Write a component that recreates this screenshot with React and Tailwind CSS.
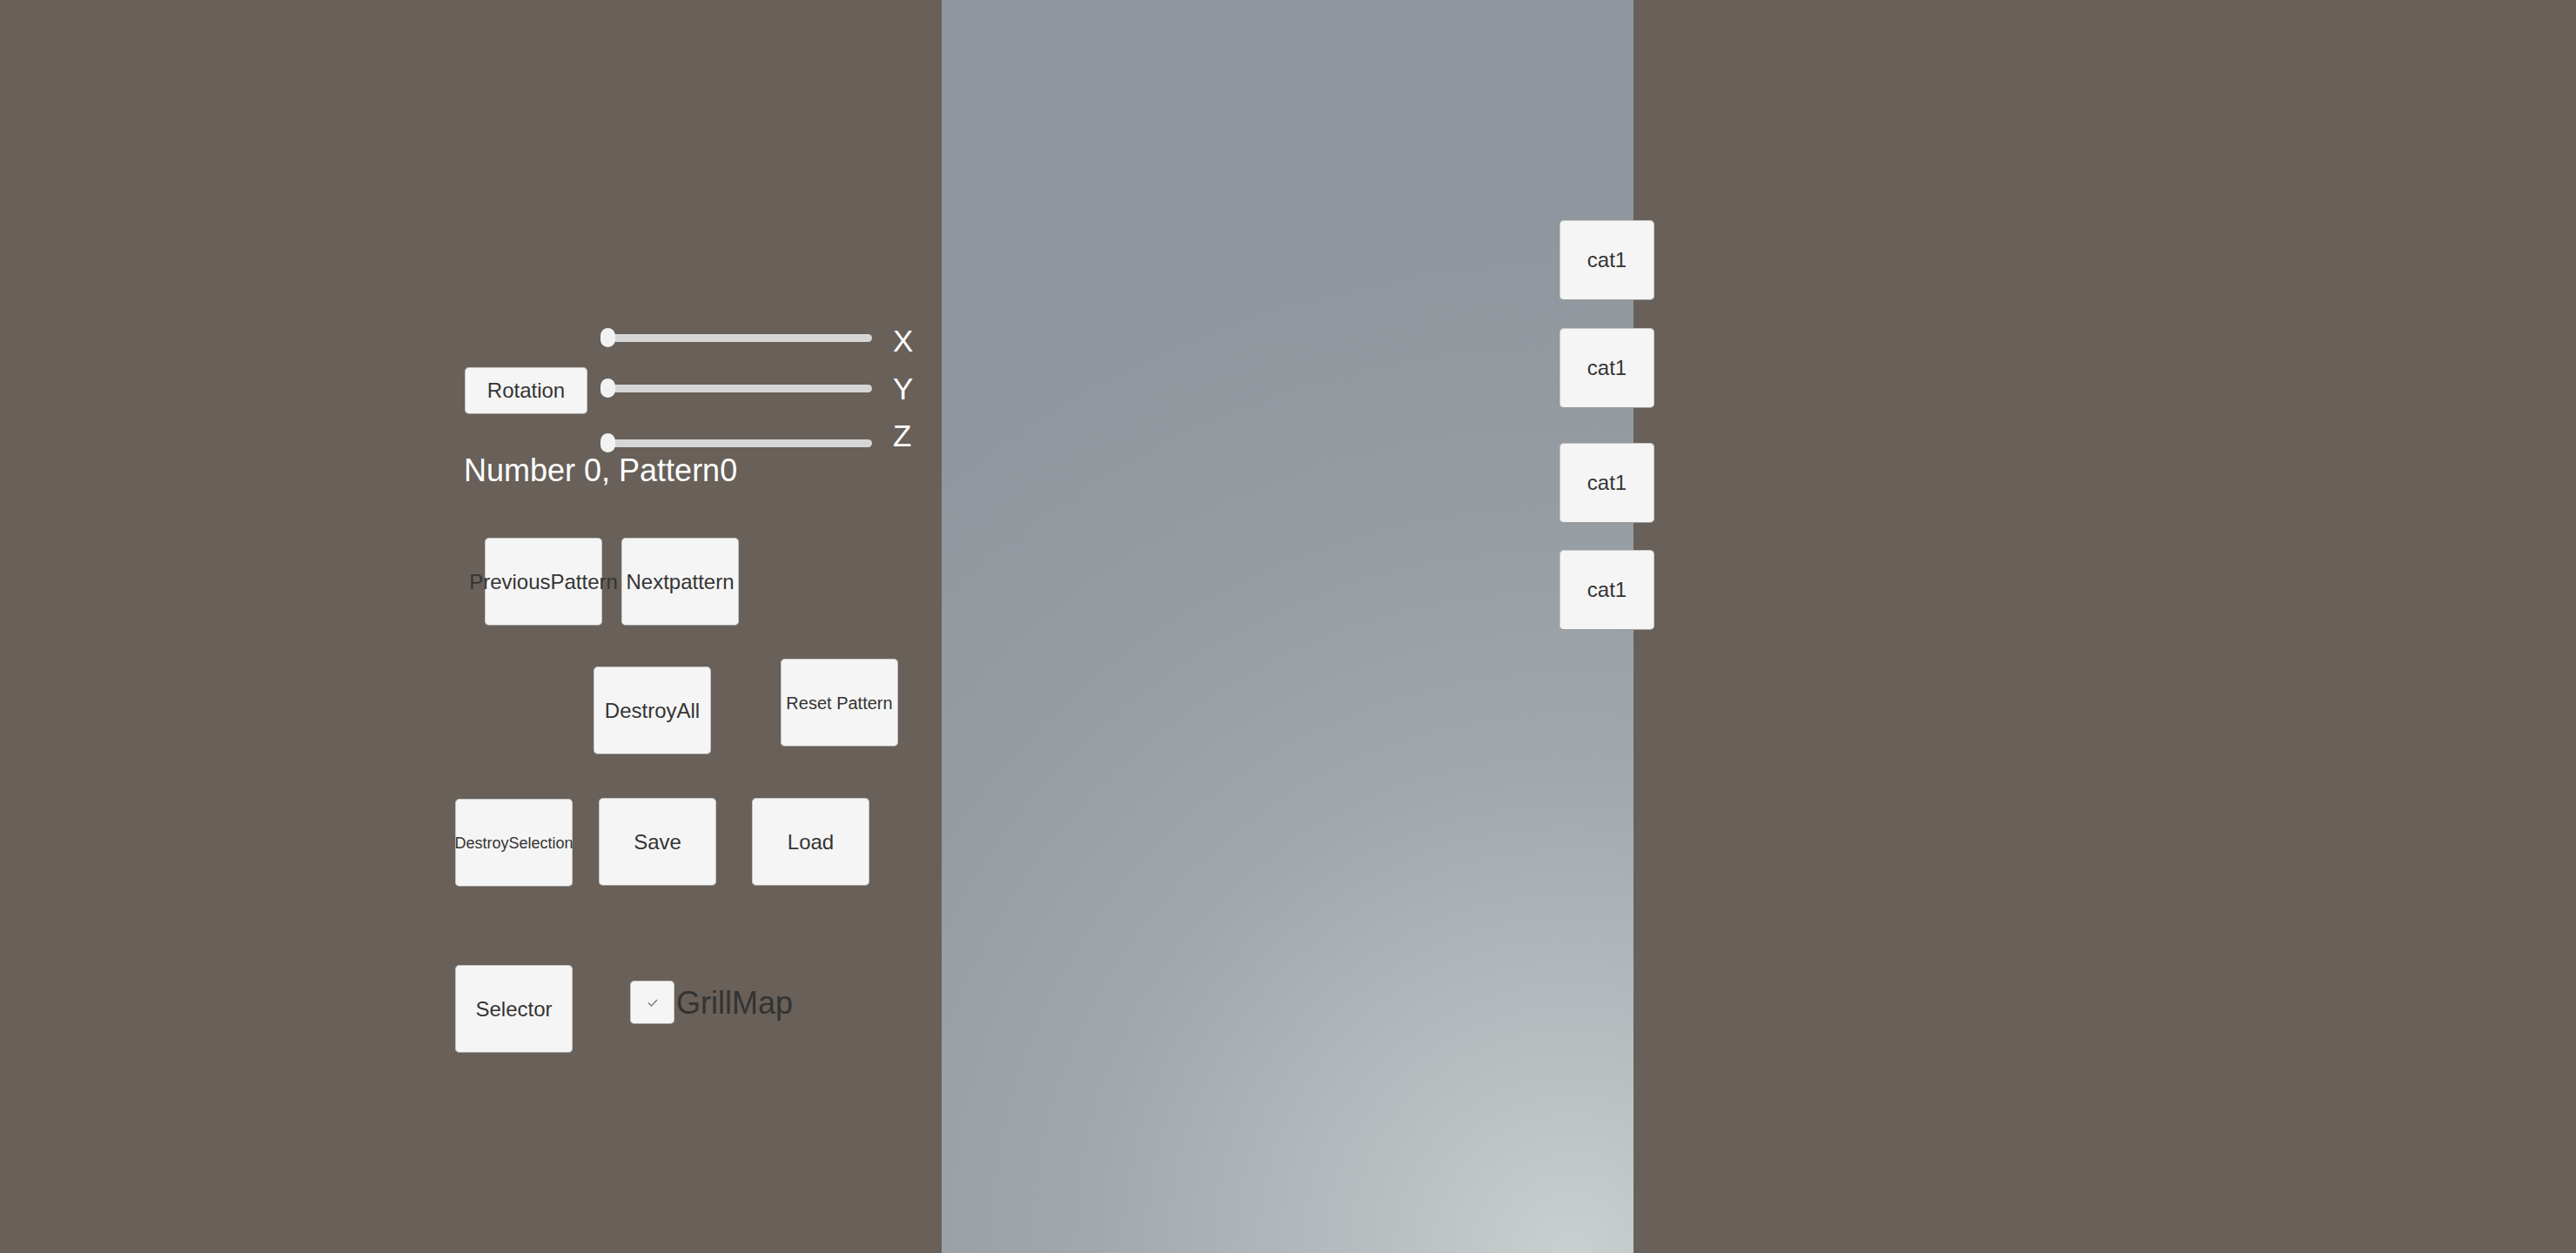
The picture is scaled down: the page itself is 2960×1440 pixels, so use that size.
import React from 'react';

const font = "font-['Liberation_Sans',Arial,sans-serif]";

function UiButton({ label, className = '', textSize = 'text-[24px]' }) {
  return (
    <button
      type="button"
      className={`flex items-center justify-center shrink-0 bg-[#f5f5f5] rounded-[5px] border border-[#c6c6c6] border-b-[#9c9c9c] text-[#343434] leading-none whitespace-nowrap ${textSize} ${className}`}
    >
      {label}
    </button>
  );
}

function AxisSlider({ axis, rowClass = '', labelClass = '' }) {
  return (
    <div className={`flex items-center h-[24px] ${rowClass}`}>
      <div className="relative w-[312px] h-[24px] flex items-center">
        <div className="w-full h-[9px] rounded-full bg-[#d6d6d6]" />
        <div className="absolute left-0 top-[1px] w-[17px] h-[22px] rounded-full bg-[#f2f2f2]" />
      </div>
      <span className={`ml-[24px] text-[35px] leading-none text-white ${labelClass}`}>{axis}</span>
    </div>
  );
}

export default function App() {
  const cats = [
    { id: 1, gap: '' },
    { id: 2, gap: 'mt-[32px]' },
    { id: 3, gap: 'mt-[40px]' },
    { id: 4, gap: 'mt-[31px]' },
  ];

  return (
    <div className={`w-[2960px] h-[1440px] bg-[#686059] flex overflow-hidden ${font}`}>

      {/* left control panel */}
      <div className="w-[1082px] shrink-0 pl-[523px] pt-[376px] flex flex-col">

        {/* rotation + sliders */}
        <div className="flex items-center">
          <UiButton label="Rotation" className="ml-[11px] w-[141px] h-[54px]" />
          <div className="ml-[15px] flex flex-col">
            <AxisSlider axis="X" labelClass="mt-[6px]" />
            <AxisSlider axis="Y" rowClass="mt-[34px]" />
            <AxisSlider axis="Z" rowClass="mt-[39px]" labelClass="mb-[18px]" />
          </div>
        </div>

        <p className="mt-[2px] ml-[10px] text-[36px] leading-none text-white">Number 0, Pattern0</p>

        {/* pattern navigation */}
        <div className="mt-[59px] ml-[34px] flex gap-[22px]">
          <UiButton label="PreviousPattern" className="w-[135px] h-[101px]" />
          <UiButton label="Nextpattern" className="w-[135px] h-[101px]" />
        </div>

        <div className="mt-[38px] flex items-start">
          <UiButton label="DestroyAll" className="ml-[159px] mt-[9px] w-[135px] h-[101px]" />
          <UiButton label="Reset Pattern" textSize="text-[20px]" className="ml-[80px] w-[135px] h-[101px]" />
        </div>

        <div className="mt-[50px] flex items-start">
          <UiButton label="DestroySelection" textSize="text-[18px]" className="mt-[1px] w-[135px] h-[101px]" />
          <UiButton label="Save" className="ml-[30px] w-[135px] h-[101px]" />
          <UiButton label="Load" className="ml-[41px] w-[135px] h-[101px]" />
        </div>

        <div className="mt-[90px] flex items-start">
          <UiButton label="Selector" className="w-[135px] h-[101px]" />
          <div className="ml-[66px] mt-[18px] w-[51px] h-[50px] shrink-0 rounded-[5px] bg-[#f5f5f5] border border-[#c6c6c6] border-b-[#9c9c9c] flex items-center justify-center">
            <svg width="12" height="9" viewBox="0 0 12 9" fill="none">
              <polyline points="1,4.5 4.5,8 11,1" stroke="#7a7a7a" strokeWidth="1.3" />
            </svg>
          </div>
          <span className="ml-[2px] mt-[26px] text-[36px] leading-none text-[#333333]">GrillMap</span>
        </div>
      </div>

      {/* viewport panel */}
      <div className="w-[795px] shrink-0 h-full pt-[253px] flex justify-end bg-[radial-gradient(circle_at_91%_100%,#cacfcf_0px,#b4babd_280px,#a1a7ad_560px,#959ca2_860px,#8f969d_1180px)]">
        <div className="mr-[-24px] flex flex-col">
          {cats.map(c => (
            <UiButton key={c.id} label="cat1" className={`w-[109px] h-[92px] ${c.gap}`} />
          ))}
        </div>
      </div>
    </div>
  );
}
